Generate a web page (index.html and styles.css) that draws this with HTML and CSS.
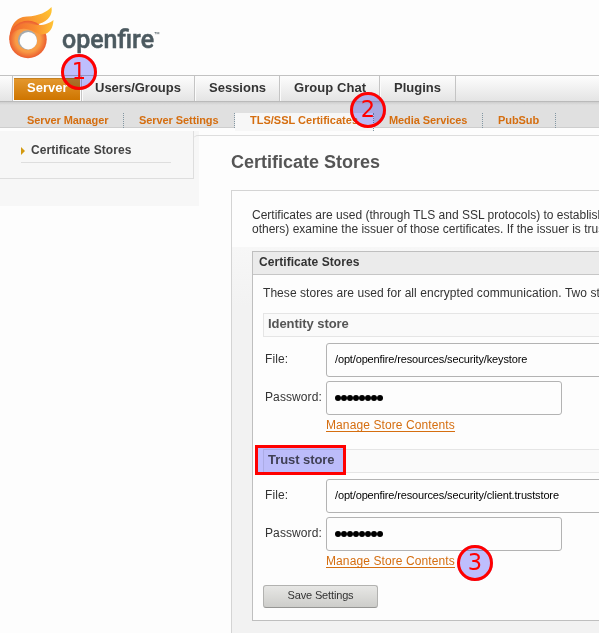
FILE: index.html
```
<!DOCTYPE html>
<html lang="en">
<head>
<meta charset="utf-8">
<title>Openfire Certificate Stores</title>
<link rel="stylesheet" href="styles.css">
</head>
<body>
<header class="header">
<svg class="logo" width="170" height="65" viewBox="0 0 170 65">
<defs>
<radialGradient id="ring" cx="50%" cy="50%" r="52%"><stop offset="0" stop-color="#ffb050"/><stop offset=".65" stop-color="#f89a45"/><stop offset="1" stop-color="#ea552c"/></radialGradient>
<linearGradient id="flame" gradientUnits="userSpaceOnUse" x1="10" y1="36" x2="50" y2="10"><stop offset="0" stop-color="#ef6a2b"/><stop offset=".5" stop-color="#f99431"/><stop offset="1" stop-color="#ffc332"/></linearGradient>
<linearGradient id="tail" x1="0" y1="0" x2="1" y2="0"><stop offset="0" stop-color="#ef642e"/><stop offset=".55" stop-color="#f98b31"/><stop offset="1" stop-color="#ffc335"/></linearGradient>
</defs>
<path fill="url(#flame)" d="M9.500 40C9.500 27 15 17 27 16.500C39 16 47 12 51.500 7C53 15 48 21 40 23.500L26 30Z"/>
<circle cx="28" cy="39.500" r="18.700" fill="url(#ring)"/>
<path fill="url(#tail)" d="M12 31C17 24 25 22.500 31 24C41 26.500 49 24 53.500 20C53 28 50 34 42 34.500C36 34 34 30 26 29C19 28 14 31 10 36Z"/>
<circle cx="27.500" cy="40" r="9.700" fill="#a4a9ac"/>
<circle cx="28.300" cy="40.700" r="8.700" fill="#fdfdfd"/>
<text class="wordmark" x="62" y="48" textLength="92" lengthAdjust="spacingAndGlyphs">openfire</text>
<text class="trademark" x="154" y="38" textLength="6" lengthAdjust="spacingAndGlyphs">™</text>
</svg>
</header>
<nav class="tabs">
<a class="tab tab-active w-server"><span class="t-server">Server</span></a>
<a class="tab w-users"><span>Users/Groups</span></a>
<a class="tab w-sessions"><span>Sessions</span></a>
<a class="tab w-chat"><span>Group Chat</span></a>
<a class="tab w-plugins"><span>Plugins</span></a>
</nav>
<nav class="subtabs">
<a class="subtab s-manager">Server Manager</a>
<a class="subtab s-settings">Server Settings</a>
<a class="subtab subtab-active s-tls">TLS/SSL Certificates</a>
<a class="subtab s-media">Media Services</a>
<a class="subtab s-pubsub">PubSub</a>
</nav>
<div class="page">
<aside class="sidebar">
<div class="sidebox"><div class="sideitem"><svg width="4" height="8" viewBox="0 0 4 8"><path d="M0 0L4 4L0 8Z" fill="#d39a10"/></svg><span>Certificate Stores</span></div></div>
</aside>
<main class="main">
<h1>Certificate Stores</h1>
<section class="content">
<p class="intro"><span>Certificates are used (through TLS and SSL protocols) to establish</span><br><span>others) examine the issuer of those certificates. If the issuer is trusted</span></p>
<div class="box">
<h2>Certificate Stores</h2>
<div class="box-body">
<p class="description">These stores are used for all encrypted communication. Two stores</p>
<h3>Identity store</h3>
<div class="fields">
<label>File:</label><div class="input wide"><span class="value">/opt/openfire/resources/security/keystore</span></div>
<label>Password:</label><div class="input"><span class="dots"><i></i><i></i><i></i><i></i><i></i><i></i><i></i><i></i></span></div>
<span></span><div class="link-row"><a class="manage">Manage Store Contents</a></div>
</div>
<h3>Trust store</h3>
<div class="fields">
<label>File:</label><div class="input wide"><span class="value">/opt/openfire/resources/security/client.truststore</span></div>
<label>Password:</label><div class="input"><span class="dots"><i></i><i></i><i></i><i></i><i></i><i></i><i></i><i></i></span></div>
<span></span><div class="link-row"><a class="manage">Manage Store Contents</a></div>
</div>
<div class="save">Save Settings</div>
</div>
</div>
</section>
</main>
</div>
<div class="tint m1"></div><div class="marker m1">1</div>
<div class="tint m2"></div><div class="marker m2">2</div>
<div class="tint m3"></div><div class="marker m3">3</div>
<div class="highlight-tint"></div><div class="highlight"></div>
</body>
</html>
```
FILE: styles.css
```
* { box-sizing: border-box; }
html, body { margin: 0; height: 633px; overflow: hidden; }
body { position: relative; width: 599px; background: #fdfdfd; color: #333; font: 12px/14px "Liberation Sans", sans-serif; }
h1, h2, h3, p { margin: 0; }
.header { height: 75px; }
.logo { display: block; }
.wordmark { font: 500 26px Roboto, sans-serif; fill: #4c5a60; stroke: #4c5a60; stroke-width: .5px; }
.trademark { font: 8px Roboto, sans-serif; fill: #4c5a60; }
.tabs { display: flex; height: 27px; padding-left: 12px; border-top: 1px solid #c2c2c2; border-bottom: 1px solid #bababa; background: linear-gradient(#fdfdfd, #e4e4e4); }
.tab { height: 25px; padding: 4px 0 0 14px; border-right: 1px solid #c4c4c4; box-shadow: inset 1px 0 #fbfbfb; font-weight: bold; font-size: 13px; line-height: 15px; white-space: nowrap; }
.tab-active { padding: 2px 1px 1px; border-left: 1px solid #c4c4c4; background: #fafafa; color: #fff; }
.t-server { display: block; height: 22px; padding: 2px 0 0 13px; background: linear-gradient(#e5992f, #ce7500); box-shadow: inset 0 1px #c68222; }
.w-server { width: 70px; }
.w-users { width: 113px; padding-left: 13px; }
.w-sessions { width: 85px; }
.w-chat { width: 100px; letter-spacing: .07px; }
.w-plugins { width: 76px; }
.subtabs { display: flex; height: 26px; padding-top: 11px; border-bottom: 1px solid #cecece; background: linear-gradient(#cdcdcd, #e0e0e0 3px); }
.subtab { position: relative; height: 15px; padding: 1px 0 0 15px; border-right: 1px dotted #8296a2; color: #d56e10; font-weight: bold; font-size: 11px; line-height: 13px; letter-spacing: -.08px; white-space: nowrap; }
.subtab-active { height: 18px; background: #f7f7f7; letter-spacing: 0; }
.s-manager { width: 124px; padding-left: 27px; }
.s-settings { width: 111px; }
.s-tls { width: 139px; }
.s-media { width: 109px; }
.s-pubsub { width: 73px; }
.page { display: flex; height: 505px; padding-top: 3px; }
.sidebar { width: 199px; height: 75px; background: #f7f7f7; }
.sidebox { width: 194px; height: 48px; padding: 12px 0 0 21px; border-right: 1px solid #dedede; border-bottom: 1px solid #dedede; }
.sideitem { display: flex; align-items: center; gap: 6px; width: 150px; height: 20px; padding-bottom: 6px; border-bottom: 1px solid #dedede; color: #444; font-weight: bold; letter-spacing: .06px; }
.sideitem svg { margin-top: 3px; }
.main { width: 406px; height: 498px; margin: 4px 0 0 -6px; padding: 17px 0 0 38px; border-top: 1px solid #dedede; border-top-left-radius: 5px; flex: none; }
h1 { color: #555; font-size: 18px; line-height: 18px; }
.content { width: 390px; height: 445px; margin-top: 19px; padding: 17px 0 0 20px; border: solid #d4d4d4; border-width: 1px 0 0 1px; background: linear-gradient(#fdfdfd 56px, #f7f7f7 56px, #f2f2f2 115px); }
.intro { height: 43px; white-space: nowrap; }
.box { height: 370px; border: 1px solid #bfbfbf; background: #fdfdfd; }
h2 { height: 23px; padding: 3px 6px 0; border-bottom: 1px solid #c6c6c6; background: #ebebeb; font-size: 12px; line-height: 14px; letter-spacing: .06px; }
.box-body { padding: 11px 0 0 10px; }
.description { height: 27px; letter-spacing: .06px; white-space: nowrap; }
h3 { height: 24px; padding: 2px 4px; border: 1px solid #e5e5e5; background: #fafafa; color: #555; font-size: 13px; line-height: 15px; letter-spacing: -.06px; }
.fields { display: grid; grid-template-columns: 61px auto; grid-template-rows: 34px 34px 25px; row-gap: 4px; height: 112px; padding: 6px 0 0 2px; }
label { padding-top: 9px; letter-spacing: .1px; white-space: nowrap; }
.input { display: flex; align-items: center; width: 236px; height: 34px; padding-left: 8px; border: 1px solid #b3b3b3; border-radius: 3px; background: #fdfdfd; color: #000; font-size: 11px; letter-spacing: -.145px; }
.value { padding-bottom: 2px; }
.wide { width: 350px; }
.dots { display: flex; }
.dots i { width: 6px; height: 6px; border-radius: 50%; background: #000; }
.link-row { display: flex; align-items: flex-start; }
.manage { height: 13px; border-bottom: 1px solid #d56e10; color: #d56e10; line-height: 12px; letter-spacing: .1px; }
.save { width: 115px; height: 23px; border: 1px solid #b2b2b0; border-bottom-color: #969694; border-radius: 3px; background: linear-gradient(#e7e7e5, #cdcdca); text-align: center; font-size: 11px; line-height: 19px; letter-spacing: -.15px; }
.tint, .marker { position: absolute; width: 36px; height: 36px; border-radius: 50%; }
.tint, .highlight-tint { background: #c0c0ff; mix-blend-mode: multiply; }
.marker { border: 3px solid #f00; color: #f00; text-align: center; font: 22.500px/29px "DejaVu Sans", sans-serif; }
.m1 { left: 61px; top: 54px; }
.m2 { left: 350px; top: 92px; }
.m3 { left: 457px; top: 545px; }
.highlight, .highlight-tint { position: absolute; left: 255px; top: 445px; width: 91px; height: 30px; }
.highlight { border: 3px solid #f00; }
```
